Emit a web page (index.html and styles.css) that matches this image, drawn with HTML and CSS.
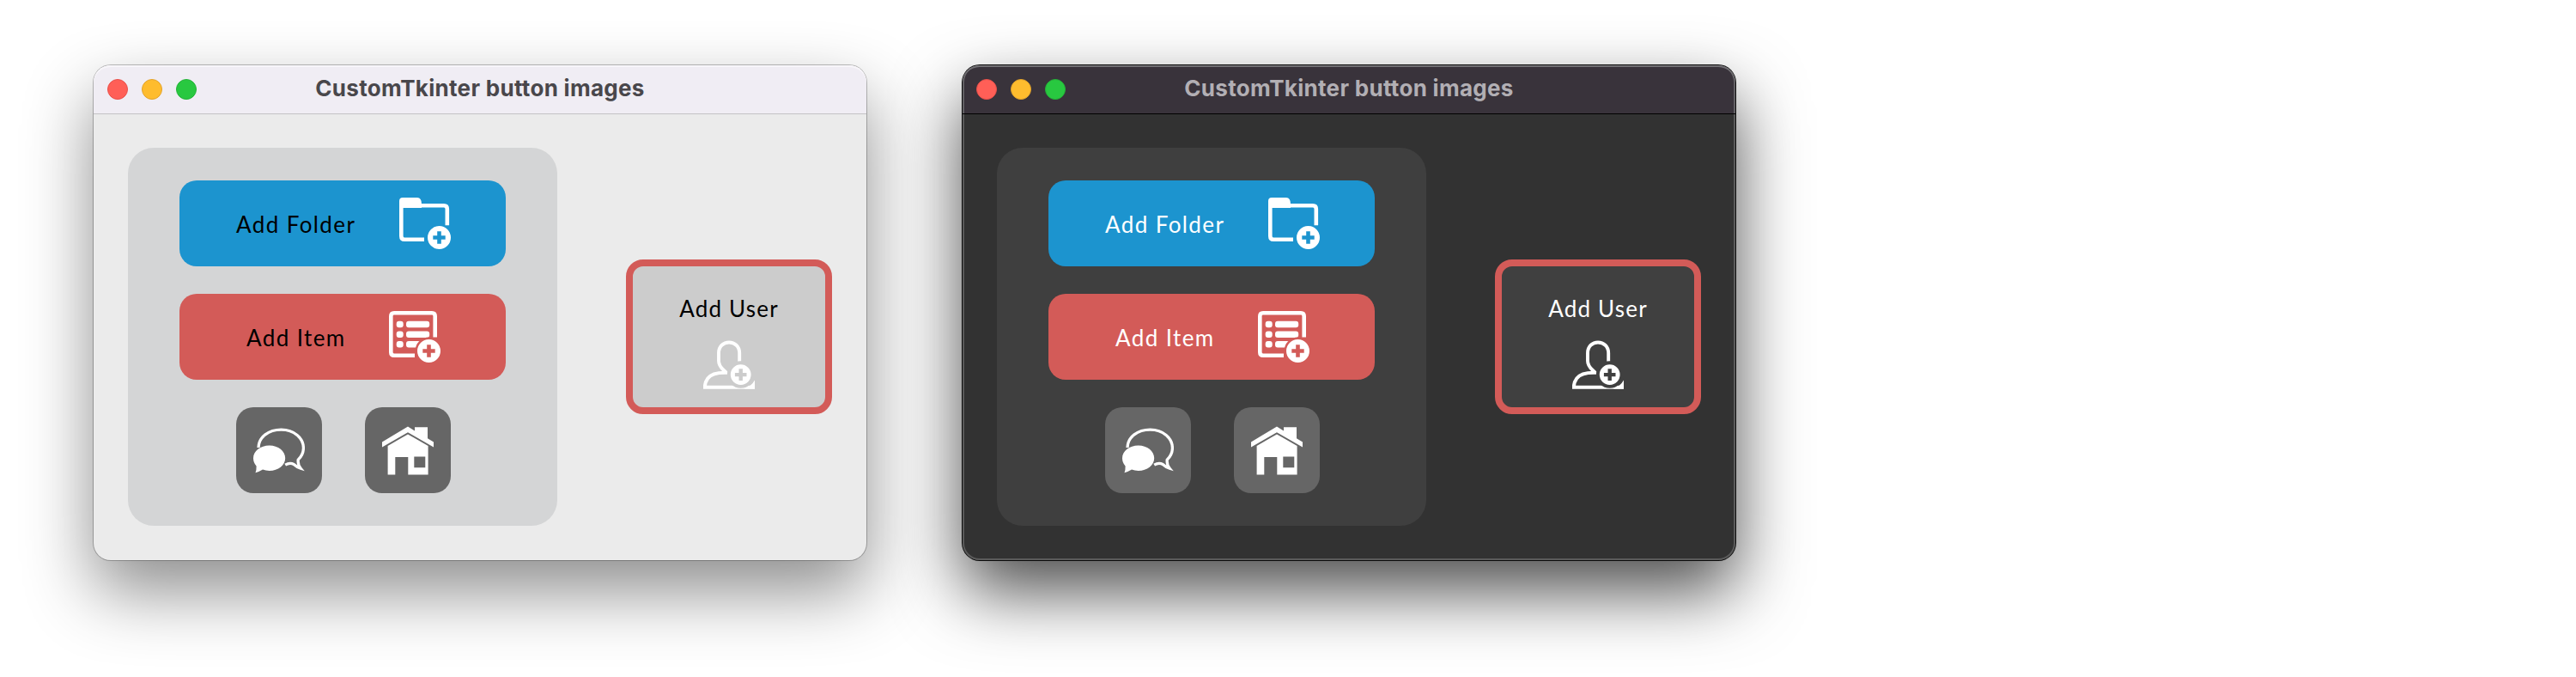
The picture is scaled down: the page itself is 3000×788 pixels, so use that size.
FILE: index.html
```html
<!DOCTYPE html>
<html lang="en">
<head>
<meta charset="utf-8">
<title>CustomTkinter button images</title>
<link rel="stylesheet" href="styles.css">
</head>
<body>
<svg class="defs" width="0" height="0" aria-hidden="true">
  <defs>
    <mask id="badge-cut" maskUnits="userSpaceOnUse" x="0" y="0" width="60" height="60">
      <rect width="60" height="60" fill="#fff"/>
      <circle cx="46.5" cy="46.5" r="16" fill="#000"/>
    </mask>
    <mask id="user-cut" maskUnits="userSpaceOnUse" x="0" y="0" width="60" height="60">
      <rect width="60" height="60" fill="#fff"/>
      <circle cx="43.7" cy="41" r="15.8" fill="#000"/>
    </mask>
    <symbol id="badge" viewBox="0 0 60 60">
      <path fill-rule="evenodd" d="M46.5 33a13.5 13.5 0 1 0 0 27a13.5 13.5 0 1 0 0-27zM44.2 39.3h4.6v4.9h4.9v4.6h-4.9v4.9h-4.6v-4.9h-4.9v-4.6h4.9z"/>
    </symbol>
    <symbol id="folder" viewBox="0 0 60 60">
      <path d="M0 13V4Q0 0 4 0H21Q26 0 26 7.5V12H4.5z"/>
      <path d="M24 9.3H52Q55.8 9.3 55.8 13.3V32.3M29 48.7H6Q2.3 48.7 2.3 44.7V8" fill="none" stroke="#fff" stroke-width="4.6"/>
      <use href="#badge"/>
    </symbol>
    <symbol id="list" viewBox="0 0 60 60">
      <g mask="url(#badge-cut)">
        <path d="M30 51.7H6Q2.3 51.7 2.3 48V6Q2.3 2.3 6 2.3H50Q53.7 2.3 53.7 6V30.5" fill="none" stroke="#fff" stroke-width="4.6"/>
        <rect x="8.7" y="11.7" width="8" height="7.6" rx="3"/>
        <rect x="8.7" y="23.4" width="8" height="7.6" rx="3"/>
        <rect x="8.7" y="35" width="8" height="7.6" rx="3"/>
        <rect x="20" y="11.7" width="27.2" height="7.6" rx="3"/>
        <rect x="20" y="23.4" width="27.2" height="7.6" rx="3"/>
        <rect x="20" y="35" width="20" height="7.6" rx="3"/>
      </g>
      <use href="#badge"/>
    </symbol>
    <symbol id="chat" viewBox="0 0 60 60">
      <path d="M18.7 24.6C29 24.6 37.2 31.2 37.2 39.3S29 54 18.7 54Q14.5 54 11 52.6Q7.5 54.8 2.5 56.3Q3.8 53 3.6 48.6Q0 44.5 0 39.3C0 31.2 8.4 24.6 18.7 24.6z"/>
      <path d="M6 27C6.3 14.5 18 6.2 32.5 6.2C47.5 6.2 58.4 16 58.4 27.5C58.4 33.5 55.8 37.6 52.2 41.2C51.8 45.5 53 48.5 55.2 51.2Q51 50 47.2 46.5Q42.5 44 37.2 47.2" fill="none" stroke="#fff" stroke-width="3.3"/>
    </symbol>
    <symbol id="home" viewBox="0 0 60 60">
      <path d="M30 2.6L38 7.5V3.2H53V16.3L60 20.4V26.6L30 9.2L0 26.6V20.4z"/>
      <path fill-rule="evenodd" d="M30 11.4L53.6 25V58.6H30.3V38H15.3V58.6H6.6V25zM37.3 37.6H50.3V50.3H37.3z"/>
    </symbol>
    <symbol id="user" viewBox="0 0 60 60">
      <path d="M42.2 40V16C42.2 8 36.5 3.5 30 3.5S18 8 18 16V25C18 30 20.5 33 24 36L27 38.8C16 38.5 9 40.5 5.2 45.5C3 48.5 1.8 51 1.8 55.7H60" fill="none" stroke="#fff" stroke-width="3.9" mask="url(#user-cut)"/>
      <path d="M60 47.5V57.6H48C53 56 57 52.5 60 47.5z"/>
      <path fill-rule="evenodd" d="M43.7 29.2a11.9 11.9 0 1 0 0 23.8a11.9 11.9 0 1 0 0-23.8zM41.5 34.3h4.4v4.6h4.6v4.4h-4.6v4.6h-4.4v-4.6h-4.6v-4.4h4.6z"/>
    </symbol>
  </defs>
</svg>
<main class="stage">
  <section class="window light">
    <header class="titlebar">
      <div class="lights"><i class="dot close"></i><i class="dot minimize"></i><i class="dot zoom"></i></div>
      <h1 class="title">CustomTkinter button images</h1>
    </header>
    <div class="content">
      <div class="panel">
        <button class="button wide blue folder"><span>Add Folder</span><svg class="icon"><use href="#folder"/></svg></button>
        <button class="button wide red item"><span>Add Item</span><svg class="icon"><use href="#list"/></svg></button>
        <div class="row">
          <button class="button square" aria-label="Chat"><svg class="icon"><use href="#chat"/></svg></button>
          <button class="button square" aria-label="Home"><svg class="icon"><use href="#home"/></svg></button>
        </div>
      </div>
      <button class="button user"><span>Add User</span><svg class="icon"><use href="#user"/></svg></button>
    </div>
  </section>
  <section class="window dark">
    <header class="titlebar">
      <div class="lights"><i class="dot close"></i><i class="dot minimize"></i><i class="dot zoom"></i></div>
      <h1 class="title">CustomTkinter button images</h1>
    </header>
    <div class="content">
      <div class="panel">
        <button class="button wide blue folder"><span>Add Folder</span><svg class="icon"><use href="#folder"/></svg></button>
        <button class="button wide red item"><span>Add Item</span><svg class="icon"><use href="#list"/></svg></button>
        <div class="row">
          <button class="button square" aria-label="Chat"><svg class="icon"><use href="#chat"/></svg></button>
          <button class="button square" aria-label="Home"><svg class="icon"><use href="#home"/></svg></button>
        </div>
      </div>
      <button class="button user"><span>Add User</span><svg class="icon"><use href="#user"/></svg></button>
    </div>
  </section>
</main>
</body>
</html>
```
FILE: styles.css
```css
* { box-sizing: border-box; }

body {
  margin: 0;
  background: #fff;
  overflow: hidden;
}

.defs { display: block; }

.stage {
  display: flex;
  align-items: flex-start;
  gap: 112px;
  height: 788px;
  padding: 76px 0 0 109px;
}

.window {
  flex: none;
  width: 900px;
  height: 576px;
  border-radius: 20px;
  display: flex;
  flex-direction: column;
}

.window.light {
  --text: #000;
  --panel: #d4d5d6;
  --square: #666;
  --user: #ccc;
  --line: #c4c3c5;
  background: #ebebeb;
  box-shadow: 0 0 0 1px rgba(0, 0, 0, .25), 0 36px 80px rgba(0, 0, 0, .45);
}

.window.dark {
  --text: #fff;
  --panel: #3f3f3f;
  --square: #666;
  --user: #404040;
  --line: #000;
  background: #323232;
  box-shadow: inset 0 0 0 2px #5a5a5a, 0 0 0 1px #0c0c0c, 0 36px 80px rgba(0, 0, 0, .7);
}

.titlebar {
  flex: none;
  height: 56px;
  display: grid;
  grid-template-columns: 1fr auto 1fr;
  align-items: center;
  padding: 0 16px;
  border-radius: 20px 20px 0 0;
}

.light .titlebar {
  background: #f0edf4;
  box-shadow: inset 0 2px 0 #f8f6fa;
}

.dark .titlebar {
  background: #39333b;
  box-shadow: inset 0 2px 0 #727074, inset 2px 0 0 #626064, inset -2px 0 0 #626064;
}

.lights { display: flex; gap: 16px; }

.dot {
  width: 24px;
  height: 24px;
  border-radius: 50%;
  border: 1px solid;
}

.close { background: #ff5f57; border-color: #e9504a; }
.minimize { background: #febc2e; border-color: #e3a32a; }
.zoom { background: #28c840; border-color: #24b338; }

.title {
  margin: 0;
  padding-bottom: 2px;
  font: 700 26px/32px Inter, sans-serif;
  letter-spacing: .3px;
  color: #49474b;
  white-space: nowrap;
}

.dark .title { color: #b2afb4; }

.content {
  flex: 1;
  display: flex;
  align-items: center;
  justify-content: space-between;
  padding: 0 40px;
}

/* Separator between the title bar and the window body */
.content {
  background: linear-gradient(var(--line), var(--line)) 0 0 / 100% 1px no-repeat;
}

.panel {
  width: 500px;
  height: 440px;
  border-radius: 30px;
  background: var(--panel);
  display: flex;
  flex-direction: column;
  align-items: center;
  justify-content: center;
  gap: 32px;
}

.row { display: flex; gap: 50px; padding-left: 2px; }

.button {
  appearance: none;
  border: 0;
  margin: 0;
  padding: 0;
  border-radius: 20px;
  display: flex;
  align-items: center;
  font: 400 26px/32px Lato, sans-serif;
  letter-spacing: 1.4px;
  color: var(--text);
  white-space: nowrap;
}

.wide {
  width: 380px;
  height: 100px;
  justify-content: space-between;
}

.wide span { padding-top: 2px; }

.folder { padding: 0 64px 0 66px; }
.item { padding: 0 76px 0 78px; }
.blue { background: #1c94cf; }
.red { background: #d35b58; }

.square {
  width: 100px;
  height: 100px;
  justify-content: center;
  background: var(--square);
}

.user {
  width: 240px;
  height: 180px;
  border: 8px solid #d35b58;
  background: var(--user);
  flex-direction: column;
  justify-content: center;
  gap: 20px;
  padding-top: 14px;
  letter-spacing: 1.2px;
}

.icon {
  flex: none;
  display: block;
  width: 60px;
  height: 60px;
  fill: #fff;
}
```
